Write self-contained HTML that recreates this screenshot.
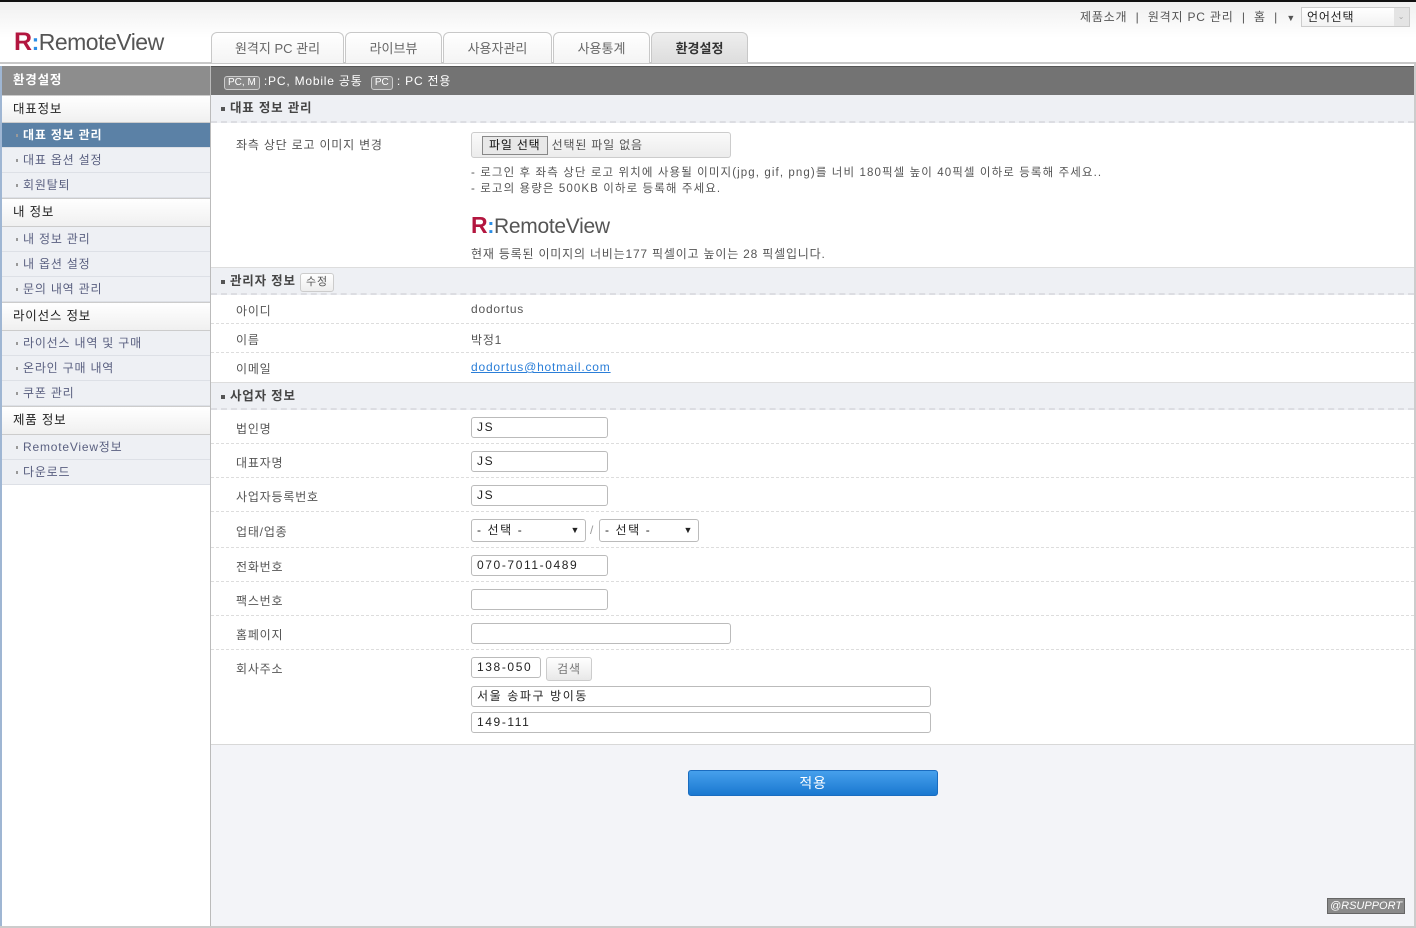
<!DOCTYPE html>
<html><head><meta charset="utf-8"><style>
*{box-sizing:border-box;margin:0;padding:0}
body{width:1416px;height:928px;position:relative;background:#fff;font-family:"Liberation Sans","Noto Sans CJK KR",sans-serif;font-size:12px;color:#555;overflow:hidden;letter-spacing:0.8px}
.a{position:absolute}
#hdr{left:0;top:0;width:1416px;height:64px;background:linear-gradient(#f0f0f0,#fff 60%);border-top:2px solid #111;border-bottom:2px solid #c8c8c8}
.tab{top:32px;height:31px;border:1px solid #c8c8c8;border-bottom:none;border-radius:6px 6px 0 0;background:linear-gradient(#fff,#f4f4f4);text-align:center;line-height:31px;font-size:13px;color:#666;letter-spacing:0}
.tab.on{background:linear-gradient(#eee,#ddd);color:#333;font-weight:bold}
#sb{left:2px;top:66px;width:209px;height:862px;background:#fff;border-right:1px solid #bbb}
#lb{left:0;top:66px;width:2px;height:862px;background:#9fb6d3}
.sh{position:absolute;left:0;width:208px;background:linear-gradient(#fff,#f0f0f0);border-bottom:1px solid #ccc;border-top:1px solid #ccc;padding-left:11px;color:#222;font-size:12.5px}
.si{position:absolute;left:0;width:208px;height:25px;background:#eef0f4;border-bottom:1px solid #dde0e6;line-height:24px;padding-left:21px;color:#5a6080;font-size:12px}
.si:before{content:"";position:absolute;left:14px;top:11px;width:2px;height:3px;background:#999}
.si.on{background:#5b81a6;color:#fff;font-weight:bold}
.sec{position:absolute;left:211px;width:1203px;height:28px;background:#eef0f4;border-bottom:2px dashed #dcdde2;line-height:27px;padding-left:19px;font-weight:bold;color:#444;font-size:12.5px}
.sec:before{content:"";position:absolute;left:10px;top:12px;width:4px;height:4px;background:#555}
.lab{position:absolute;left:236px;color:#555}
.val{position:absolute;left:471px;color:#555}
.row{position:absolute;left:211px;width:1203px;border-bottom:1px dashed #ddd}
.in{position:absolute;height:21px;border:1px solid #bbb;border-radius:3px;background:#fff;padding-left:5px;line-height:19px;color:#222;font-size:12px;letter-spacing:1.6px}
.bx{display:inline-block;border:1px solid #ccc;border-radius:3px;padding:0 3px;font-size:10px;line-height:12px;background:#888;color:#fff;letter-spacing:0}
</style></head><body>
<div id="hdr" class="a"></div>
<div class="a" style="left:1080px;top:8px;color:#555;font-size:12px">제품소개 &nbsp;|&nbsp; 원격지 PC 관리 &nbsp;|&nbsp; 홈 &nbsp;| &nbsp;<span style="font-size:9px">▼</span></div>
<div class="a" style="left:1301px;top:7px;width:109px;height:20px;border:1px solid #ccc;background:linear-gradient(#fff,#f2f2f2);padding-left:5px;line-height:18px;color:#222">언어선택<span style="position:absolute;right:0;top:0;width:15px;height:18px;background:#e4e4e4;color:#aaa;font-size:8px;text-align:center">⌄</span></div>
<div class="a" style="left:14px;top:28px;font-size:23px;color:#555;letter-spacing:-0.5px"><span style="color:#b3163f;font-weight:bold;font-size:25px">R</span><span style="color:#2a8ee6;font-weight:bold">:</span>RemoteView</div>
<div class="a tab" style="left:211px;width:133px">원격지 PC 관리</div>
<div class="a tab" style="left:345px;width:97px">라이브뷰</div>
<div class="a tab" style="left:443px;width:109px">사용자관리</div>
<div class="a tab" style="left:553px;width:97px">사용통계</div>
<div class="a tab on" style="left:651px;width:97px">환경설정</div>

<div id="lb" class="a"></div>
<div id="sb" class="a">
<div class="a" style="left:0;top:0;width:208px;height:29px;background:#8d8d8d;color:#fff;font-weight:bold;line-height:29px;padding-left:11px;font-size:12.5px">환경설정</div>
<div class="sh" style="top:29px;height:28px;line-height:26px">대표정보</div>
<div class="si on" style="top:57px">대표 정보 관리</div>
<div class="si" style="top:82px">대표 옵션 설정</div>
<div class="si" style="top:107px">회원탈퇴</div>
<div class="sh" style="top:132px;height:29px;line-height:27px">내 정보</div>
<div class="si" style="top:161px">내 정보 관리</div>
<div class="si" style="top:186px">내 옵션 설정</div>
<div class="si" style="top:211px">문의 내역 관리</div>
<div class="sh" style="top:236px;height:29px;line-height:27px">라이선스 정보</div>
<div class="si" style="top:265px">라이선스 내역 및 구매</div>
<div class="si" style="top:290px">온라인 구매 내역</div>
<div class="si" style="top:315px">쿠폰 관리</div>
<div class="sh" style="top:340px;height:29px;line-height:27px">제품 정보</div>
<div class="si" style="top:369px">RemoteView정보</div>
<div class="si" style="top:394px">다운로드</div>
</div>

<div class="a" style="left:211px;top:66px;width:1203px;height:29px;background:#737373;border-top:1px solid #555;color:#fff;line-height:28px;padding-left:13px;font-size:12px"><span class="bx">PC, M</span> :PC, Mobile 공통 &nbsp;<span class="bx">PC</span> : PC 전용</div>
<div class="a" style="left:1414px;top:64px;width:2px;height:864px;background:#ccc"></div>

<div class="sec" style="top:95px">대표 정보 관리</div>
<div class="lab" style="top:136px">좌측 상단 로고 이미지 변경</div>
<div class="a" style="left:471px;top:132px;width:260px;height:26px;border:1px solid #ccc;border-radius:3px;background:linear-gradient(#fafafa,#ececec);padding:3px 0 0 10px;color:#555"><span style="display:inline-block;border:1px solid #888;background:#e8e8e8;color:#111;padding:0 6px;line-height:17px">파일 선택</span> 선택된 파일 없음</div>
<div class="val" style="top:164px;font-size:11.5px;letter-spacing:1.1px">- 로그인 후 좌측 상단 로고 위치에 사용될 이미지(jpg, gif, png)를 너비 180픽셀 높이 40픽셀 이하로 등록해 주세요..</div>
<div class="val" style="top:180px;font-size:11.5px;letter-spacing:1.1px">- 로고의 용량은 500KB 이하로 등록해 주세요.</div>
<div class="val" style="top:212px;font-size:21px;color:#555;letter-spacing:-0.3px"><span style="color:#b3163f;font-weight:bold;font-size:23px">R</span><span style="color:#2a8ee6;font-weight:bold">:</span>RemoteView</div>
<div class="val" style="top:245px">현재 등록된 이미지의 너비는177 픽셀이고 높이는 28 픽셀입니다.</div>

<div class="sec" style="top:267px;border-top:1px solid #ddd">관리자 정보 <span style="display:inline-block;border:1px solid #ccc;border-radius:3px;background:linear-gradient(#fff,#eee);font-weight:normal;font-size:11px;line-height:17px;padding:0 5px;color:#555">수정</span></div>
<div class="row" style="top:295px;height:29px"></div><div class="lab" style="top:302px">아이디</div><div class="val" style="top:302px">dodortus</div>
<div class="row" style="top:324px;height:29px"></div><div class="lab" style="top:331px">이름</div><div class="val" style="top:331px">박정1</div>
<div class="lab" style="top:360px">이메일</div><div class="val" style="top:360px;color:#2a7ed8;text-decoration:underline">dodortus@hotmail.com</div>

<div class="sec" style="top:382px;border-top:1px solid #ddd">사업자 정보</div>
<div class="row" style="top:410px;height:34px"></div><div class="lab" style="top:420px">법인명</div><div class="in" style="left:471px;top:417px;width:137px">JS</div>
<div class="row" style="top:444px;height:34px"></div><div class="lab" style="top:454px">대표자명</div><div class="in" style="left:471px;top:451px;width:137px">JS</div>
<div class="row" style="top:478px;height:34px"></div><div class="lab" style="top:488px">사업자등록번호</div><div class="in" style="left:471px;top:485px;width:137px">JS</div>
<div class="row" style="top:512px;height:36px"></div><div class="lab" style="top:523px">업태/업종</div>
<div class="in" style="left:471px;top:519px;width:115px;height:23px;line-height:21px">- 선택 -<span style="position:absolute;right:4px;font-size:9px">▼</span></div>
<div class="a" style="left:590px;top:523px;color:#999">/</div>
<div class="in" style="left:599px;top:519px;width:100px;height:23px;line-height:21px">- 선택 -<span style="position:absolute;right:4px;font-size:9px">▼</span></div>
<div class="row" style="top:548px;height:34px"></div><div class="lab" style="top:558px">전화번호</div><div class="in" style="left:471px;top:555px;width:137px">070-7011-0489</div>
<div class="row" style="top:582px;height:34px"></div><div class="lab" style="top:592px">팩스번호</div><div class="in" style="left:471px;top:589px;width:137px"></div>
<div class="row" style="top:616px;height:34px"></div><div class="lab" style="top:626px">홈페이지</div><div class="in" style="left:471px;top:623px;width:260px"></div>
<div class="lab" style="top:660px">회사주소</div>
<div class="in" style="left:471px;top:657px;width:70px">138-050</div>
<div class="a" style="left:546px;top:657px;width:46px;height:24px;border:1px solid #ccc;border-radius:3px;background:linear-gradient(#fff,#e8e8e8);text-align:center;line-height:22px;color:#777">검색</div>
<div class="in" style="left:471px;top:686px;width:460px">서울 송파구 방이동</div>
<div class="in" style="left:471px;top:712px;width:460px">149-111</div>

<div class="a" style="left:211px;top:744px;width:1203px;height:182px;background:#f3f4f8;border-top:1px solid #d8d8d8"></div>
<div class="a" style="left:688px;top:770px;width:250px;height:26px;border-radius:3px;background:linear-gradient(#46a0ec,#1a78d0);border:1px solid #1a6cc0;color:#fff;text-align:center;line-height:24px;font-size:14px">적용</div>
<div class="a" style="left:1327px;top:898px;width:78px;height:16px;background:#8a8a8a;border:1px solid #666;color:#fff;font-style:italic;font-size:11px;text-align:center;line-height:14px;letter-spacing:0">@RSUPPORT</div>
<div class="a" style="left:0;top:926px;width:1416px;height:2px;background:#ccc"></div>
</body></html>
